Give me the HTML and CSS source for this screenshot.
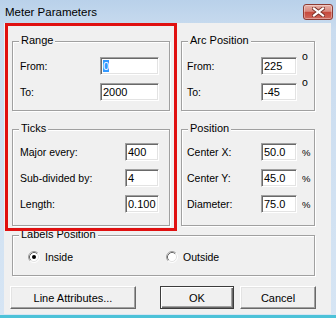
FILE: index.html
```html
<!DOCTYPE html>
<html>
<head>
<meta charset="utf-8">
<link rel="stylesheet" href="styles.css">
</head>
<body>
<div class="window">
  <div class="titlebar">
    <span class="title">Meter Parameters</span>
    <span class="close">
      <svg width="13" height="10" viewBox="0 0 13 10">
        <path d="M2 1.5 L11 8.5 M11 1.5 L2 8.5" stroke="#7a3128" stroke-width="4" stroke-linecap="square"/>
        <path d="M2 1.5 L11 8.5 M11 1.5 L2 8.5" stroke="#ffffff" stroke-width="2.2" stroke-linecap="square"/>
      </svg>
    </span>
  </div>
  <div class="client">
    <div class="columns">
      <div class="col col-left">
        <div class="group range">
          <span class="legend">Range</span>
          <div class="row"><span class="lbl">From:</span><span class="field w59"><span class="sel">0</span></span></div>
          <div class="row"><span class="lbl">To:</span><span class="field w59">2000</span></div>
        </div>
        <div class="group ticks">
          <span class="legend">Ticks</span>
          <div class="row"><span class="lbl">Major every:</span><span class="field w34">400</span></div>
          <div class="row"><span class="lbl">Sub-divided by:</span><span class="field w34">4</span></div>
          <div class="row"><span class="lbl">Length:</span><span class="field w34">0.100</span></div>
        </div>
      </div>
      <div class="col col-right">
        <div class="group arc">
          <span class="legend">Arc Position</span>
          <div class="row"><span class="lbl">From:</span><span class="field w36">225</span><span class="unit deg">o</span></div>
          <div class="row"><span class="lbl">To:</span><span class="field w36">-45</span><span class="unit deg">o</span></div>
        </div>
        <div class="group position">
          <span class="legend">Position</span>
          <div class="row"><span class="lbl">Center X:</span><span class="field w36">50.0</span><span class="unit pct">%</span></div>
          <div class="row"><span class="lbl">Center Y:</span><span class="field w36">45.0</span><span class="unit pct">%</span></div>
          <div class="row"><span class="lbl">Diameter:</span><span class="field w36">75.0</span><span class="unit pct">%</span></div>
        </div>
      </div>
    </div>
    <div class="group labels">
      <span class="legend">Labels Position</span>
      <label class="radio-item first">
        <svg class="radio" width="12" height="12" viewBox="0 0 12 12">
          <circle cx="6" cy="6" r="5" fill="#fff"/>
          <path d="M2.11 9.89 A5.5 5.5 0 0 1 9.89 2.11" fill="none" stroke="#a0a0a0"/>
          <path d="M2.82 9.18 A4.5 4.5 0 0 1 9.18 2.82" fill="none" stroke="#696969"/>
          <path d="M9.89 2.11 A5.5 5.5 0 0 1 2.11 9.89" fill="none" stroke="#ffffff"/>
          <path d="M9.18 2.82 A4.5 4.5 0 0 1 2.82 9.18" fill="none" stroke="#e3e3e3"/>
          <circle cx="6" cy="6" r="2" fill="#000"/>
        </svg>
        <span>Inside</span>
      </label>
      <label class="radio-item">
        <svg class="radio" width="12" height="12" viewBox="0 0 12 12">
          <circle cx="6" cy="6" r="5" fill="#fff"/>
          <path d="M2.11 9.89 A5.5 5.5 0 0 1 9.89 2.11" fill="none" stroke="#a0a0a0"/>
          <path d="M2.82 9.18 A4.5 4.5 0 0 1 9.18 2.82" fill="none" stroke="#696969"/>
          <path d="M9.89 2.11 A5.5 5.5 0 0 1 2.11 9.89" fill="none" stroke="#ffffff"/>
          <path d="M9.18 2.82 A4.5 4.5 0 0 1 2.82 9.18" fill="none" stroke="#e3e3e3"/>
        </svg>
        <span>Outside</span>
      </label>
    </div>
    <div class="buttons">
      <span class="btn btn-la">Line Attributes...</span>
      <span class="btn btn-ok">OK</span>
      <span class="btn btn-cancel">Cancel</span>
    </div>
  </div>
  <div class="annot"></div>
</div>
</body>
</html>
```
FILE: styles.css
```css
* { box-sizing: border-box; }
body {
  margin: 0;
  font-family: "Liberation Sans", Arial, sans-serif;
  font-size: 10.5px;
  color: #000;
}
.window {
  width: 336px;
  height: 318px;
  position: relative;
  display: flex;
  flex-direction: column;
  background: linear-gradient(#b9d1ea, #cadcef 30px, #d6e5f4);
  border-bottom: 3px solid #4cc2d8;
  overflow: hidden;
}
.titlebar {
  height: 23px;
  flex-shrink: 0;
  display: flex;
  justify-content: space-between;
  align-items: flex-start;
}
.title {
  font-size: 11.5px;
  line-height: 22px;
  padding: 1px 0 0 5px;
  color: #000;
}
.close {
  width: 30px;
  height: 16px;
  margin: 4px 3px 0 0;
  border: 1px solid #8d3b33;
  border-radius: 3px;
  background: linear-gradient(#e7b0a7, #d98a80 45%, #c7493c 52%, #d0695d);
  box-shadow: inset 0 0 0 1px rgba(255,255,255,0.35);
  display: flex;
  align-items: center;
  justify-content: center;
}
.client {
  flex: 1;
  margin: 0 5px 1px 4px;
  background: #f0f0f0;
  padding: 18px 0 0 8px;
}
.columns {
  display: flex;
  gap: 11px;
}
.col {
  display: flex;
  flex-direction: column;
  gap: 18px;
}
.col-left { width: 158px; }
.col-right { width: 134px; }
.group {
  position: relative;
  border: 1px solid #a0a0a0;
  box-shadow: inset 1px 1px 0 #fff, 1px 1px 0 #fff;
  display: flex;
  flex-direction: column;
  gap: 8px;
}
.legend {
  position: absolute;
  top: -8px;
  left: 6px;
  padding: 0 2px;
  background: #f0f0f0;
  line-height: 13px;
  font-size: 11px;
}
.range { height: 70px; padding: 15px 10px 0 7px; }
.ticks { height: 97px; padding: 13px 10px 0 7px; }
.arc { height: 70px; padding: 15px 0 0 5px; }
.position { height: 97px; padding: 13px 0 0 5px; }
.row {
  display: flex;
  align-items: center;
  height: 18px;
}
.lbl { flex: 1; }
.field {
  height: 18px;
  background: #fff;
  border-style: solid;
  border-width: 1px;
  border-color: #a0a0a0 #fff #fff #a0a0a0;
  box-shadow: inset 1px 1px 0 #696969, inset -1px -1px 0 #e3e3e3;
  padding: 0 0 0 2px;
  line-height: 16px;
  font-size: 11px;
  white-space: nowrap;
}
.w59 { width: 59px; }
.w34 { width: 34px; }
.w36 { width: 36px; }
.sel {
  background: #3399ff;
  color: #fff;
}
.unit {
  width: 17px;
  padding-left: 5px;
  line-height: 13px;
}
.deg {
  align-self: flex-start;
  margin-top: -7px;
}
.pct { font-size: 9.5px; }
.labels {
  height: 41px;
  width: 303px;
  margin-top: 9px;
  padding: 15px 0 0 15px;
  flex-direction: row;
  gap: 0;
  align-items: flex-start;
}
.radio-item {
  display: flex;
  align-items: center;
  gap: 5px;
  height: 12px;
}
.radio-item.first { width: 138px; }
.radio { display: block; flex-shrink: 0; }
.buttons {
  display: flex;
  margin: 10px 0 0 -2px;
}
.btn {
  height: 23px;
  background: #f0f0f0;
  border: 1px solid;
  border-color: #fff #696969 #696969 #fff;
  box-shadow: inset -1px -1px 0 #a0a0a0, inset 1px 1px 0 #e3e3e3;
  display: flex;
  align-items: center;
  justify-content: center;
  font-size: 11px;
}
.btn-la { width: 126px; }
.btn-ok {
  width: 74px;
  margin-left: 24px;
  border-color: #3c3c3c;
  box-shadow: inset 1px 1px 0 #fff, inset -1px -1px 0 #696969, inset -2px -2px 0 #a0a0a0;
}
.btn-cancel { width: 76px; margin-left: 6px; }
.annot {
  position: absolute;
  left: 5px;
  top: 23px;
  width: 172px;
  height: 208px;
  border: 3px solid #e01010;
  pointer-events: none;
}
```
